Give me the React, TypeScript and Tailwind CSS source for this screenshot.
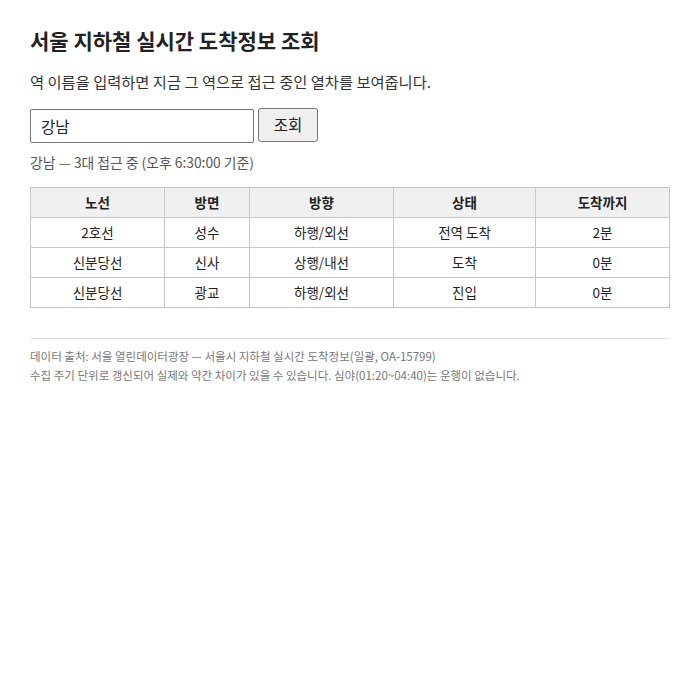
const rows = [
  { line: "2호선", dest: "성수", dir: "하행/외선", status: "전역 도착", eta: "2분" },
  { line: "신분당선", dest: "신사", dir: "상행/내선", status: "도착", eta: "0분" },
  { line: "신분당선", dest: "광교", dir: "하행/외선", status: "진입", eta: "0분" },
];

export default function App() {
  return (
    <div className="min-h-[700px] bg-white px-[30px] pt-[24px] text-[#222] font-['Noto_Sans_CJK_KR',sans-serif]">
      <h1 className="text-[21px] font-bold leading-[32px]">서울 지하철 실시간 도착정보 조회</h1>
      <p className="mt-[13px] text-[15.3px] leading-[24px] text-[#333]">
        역 이름을 입력하면 지금 그 역으로 접근 중인 열차를 보여줍니다.
      </p>

      <div className="mt-[16px] flex items-start gap-[4px]">
        <input
          defaultValue="강남"
          className="h-[34px] w-[224px] border border-[#767676] rounded-[2px] px-[10px] text-[15.5px] text-[#222] outline-none"
        />
        <button className="h-[34px] w-[60px] -mt-[1px] border border-[#767676] rounded-[3px] bg-[#efefef] text-[15.5px] text-[#222]">
          조회
        </button>
      </div>

      <p className="mt-[8px] text-[13.8px] leading-[22px] text-[#555]">강남 — 3대 접근 중 (오후 6:30:00 기준)</p>

      <table className="mt-[14px] w-full border-collapse text-[13.5px] text-[#222]">
        <thead>
          <tr className="bg-[#f0f0f0] h-[30px]">
            <th className="w-[134px] border border-[#c8c8c8] font-bold">노선</th>
            <th className="w-[85px] border border-[#c8c8c8] font-bold">방면</th>
            <th className="w-[144px] border border-[#c8c8c8] font-bold">방향</th>
            <th className="w-[142px] border border-[#c8c8c8] font-bold">상태</th>
            <th className="border border-[#c8c8c8] font-bold">도착까지</th>
          </tr>
        </thead>
        <tbody>
          {rows.map((r, i) => (
            <tr key={i} className="h-[30px] text-center">
              <td className="border border-[#c8c8c8]">{r.line}</td>
              <td className="border border-[#c8c8c8]">{r.dest}</td>
              <td className="border border-[#c8c8c8]">{r.dir}</td>
              <td className="border border-[#c8c8c8]">{r.status}</td>
              <td className="border border-[#c8c8c8]">{r.eta}</td>
            </tr>
          ))}
        </tbody>
      </table>

      <div className="mt-[30px] border-t border-[#e2e2e2] pt-[8px] text-[11.5px] leading-[19px] text-[#777]">
        <p>데이터 출처: 서울 열린데이터광장 — 서울시 지하철 실시간 도착정보(일괄, OA-15799)</p>
        <p>수집 주기 단위로 갱신되어 실제와 약간 차이가 있을 수 있습니다. 심야(01:20~04:40)는 운행이 없습니다.</p>
      </div>
    </div>
  );
}
